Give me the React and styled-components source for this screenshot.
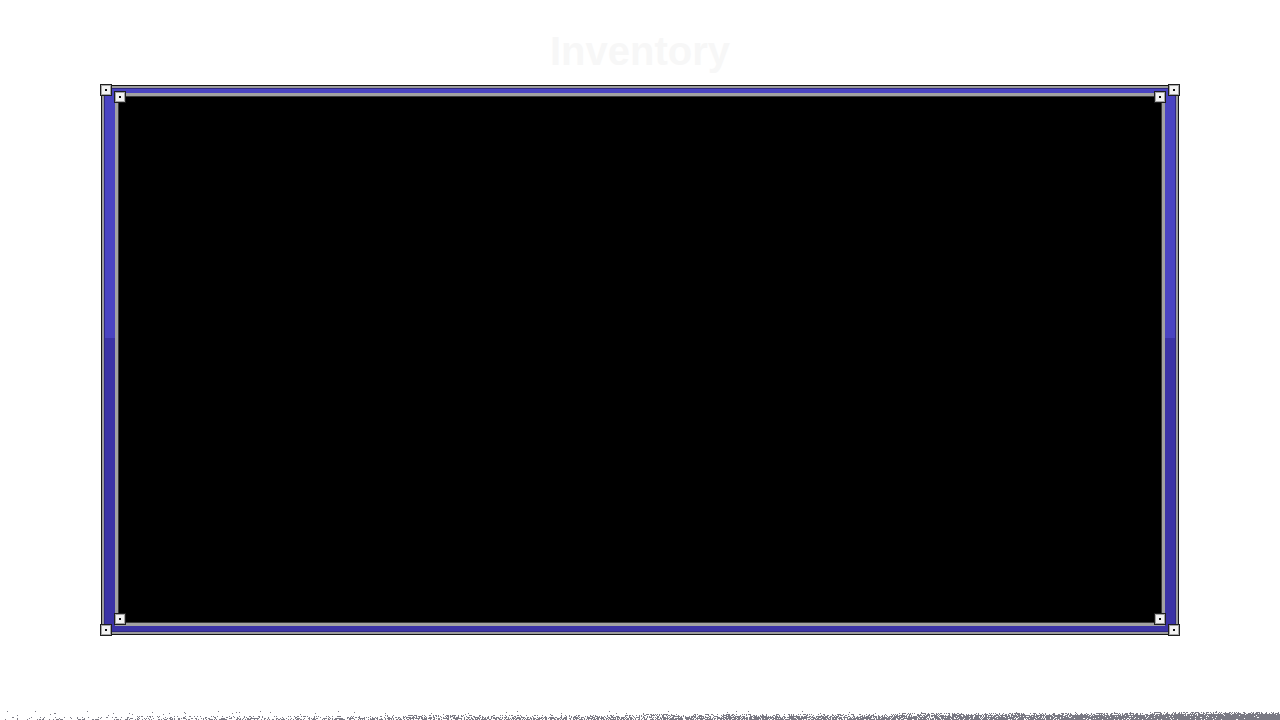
import React from "react";
import styled, { createGlobalStyle } from "styled-components";

const Global = createGlobalStyle`
  html, body { margin: 0; padding: 0; background: #ffffff; }
  body { font-family: "Liberation Sans", Arial, sans-serif; overflow: hidden; }
`;

const Page = styled.div`
  width: 1280px;
  height: 720px;
  display: flex;
  flex-direction: column;
  align-items: center;
  position: relative;
`;

const Title = styled.h1`
  margin: 0;
  height: 85px;
  display: flex;
  align-items: center;
  justify-content: center;
  padding-top: 17px;
  box-sizing: border-box;
  font-family: "Liberation Sans", Arial, sans-serif;
  font-weight: 700;
  font-size: 40px;
  color: #f7f7f7;
`;

const FrameWrap = styled.div`
  position: relative;
  width: 1078px;
  height: 550px;
`;

const Outer = styled.div`
  box-sizing: border-box;
  width: 100%;
  height: 100%;
  border: 1px solid #151515;
  background: #9c9c9c;
  padding: 2px;
  display: flex;
`;

const Blue = styled.div`
  flex: 1;
  display: flex;
  padding: 5px 11px 6px 11px;
  background: linear-gradient(
    to bottom,
    #4a44c2 0%,
    #4a44c2 46%,
    #3b33a6 46%,
    #3b33a6 100%
  );
  box-shadow: inset 0 0 0 1px #2e2880;
`;

const Inner = styled.div`
  flex: 1;
  border: 3px solid #a2a2a2;
  box-shadow: inset 0 0 0 1px #3a3a3a;
  background: #000000;
`;

const Bolt = styled.div`
  position: absolute;
  left: ${(p) => p.$x}px;
  top: ${(p) => p.$y}px;
  width: 12px;
  height: 12px;
  box-sizing: border-box;
  border: 1px solid #1e1e1e;
  background: #a6a6a6;
  display: flex;
  align-items: center;
  justify-content: center;
  &::before {
    content: "";
    width: 8px;
    height: 8px;
    box-sizing: border-box;
    background: #111;
    border: 3px solid #f2f2f2;
  }
`;

const Noise = styled.svg`
  position: absolute;
  left: 0;
  bottom: 0;
  display: block;
`;

function makeNoise() {
  const rects = [];
  let seed = 12345;
  const rnd = () => {
    seed = (seed * 1103515245 + 12345) & 0x7fffffff;
    return seed / 0x7fffffff;
  };
  for (let x = 0; x < 1280; x++) {
    const t = x / 1280;
    const depth = 2 + Math.round(t * 5);
    for (let y = 0; y < 9; y++) {
      const rowFromBottom = 8 - y;
      let p;
      if (rowFromBottom < depth - 1) p = 0.3 + t * 0.65;
      else if (rowFromBottom < depth + 1) p = 0.12 + t * 0.35;
      else p = 0.01;
      if (rnd() < p) rects.push(<rect key={`${x}-${y}`} x={x} y={y} width="1" height="1" />);
    }
  }
  return rects;
}

const noiseRects = makeNoise();

const bolts = [
  [-1, -1],
  [1067, -1],
  [-1, 539],
  [1067, 539],
  [13, 6],
  [1053, 6],
  [13, 528],
  [1053, 528],
];

export default function App() {
  return (
    <>
      <Global />
      <Page>
        <Title>Inventory</Title>
        <FrameWrap>
          <Outer>
            <Blue>
              <Inner />
            </Blue>
          </Outer>
          {bolts.map(([x, y], i) => (
            <Bolt key={i} $x={x} $y={y} />
          ))}
        </FrameWrap>
        <Noise width="1280" height="9" viewBox="0 0 1280 9" fill="#7a7a84">
          {noiseRects}
        </Noise>
      </Page>
    </>
  );
}
